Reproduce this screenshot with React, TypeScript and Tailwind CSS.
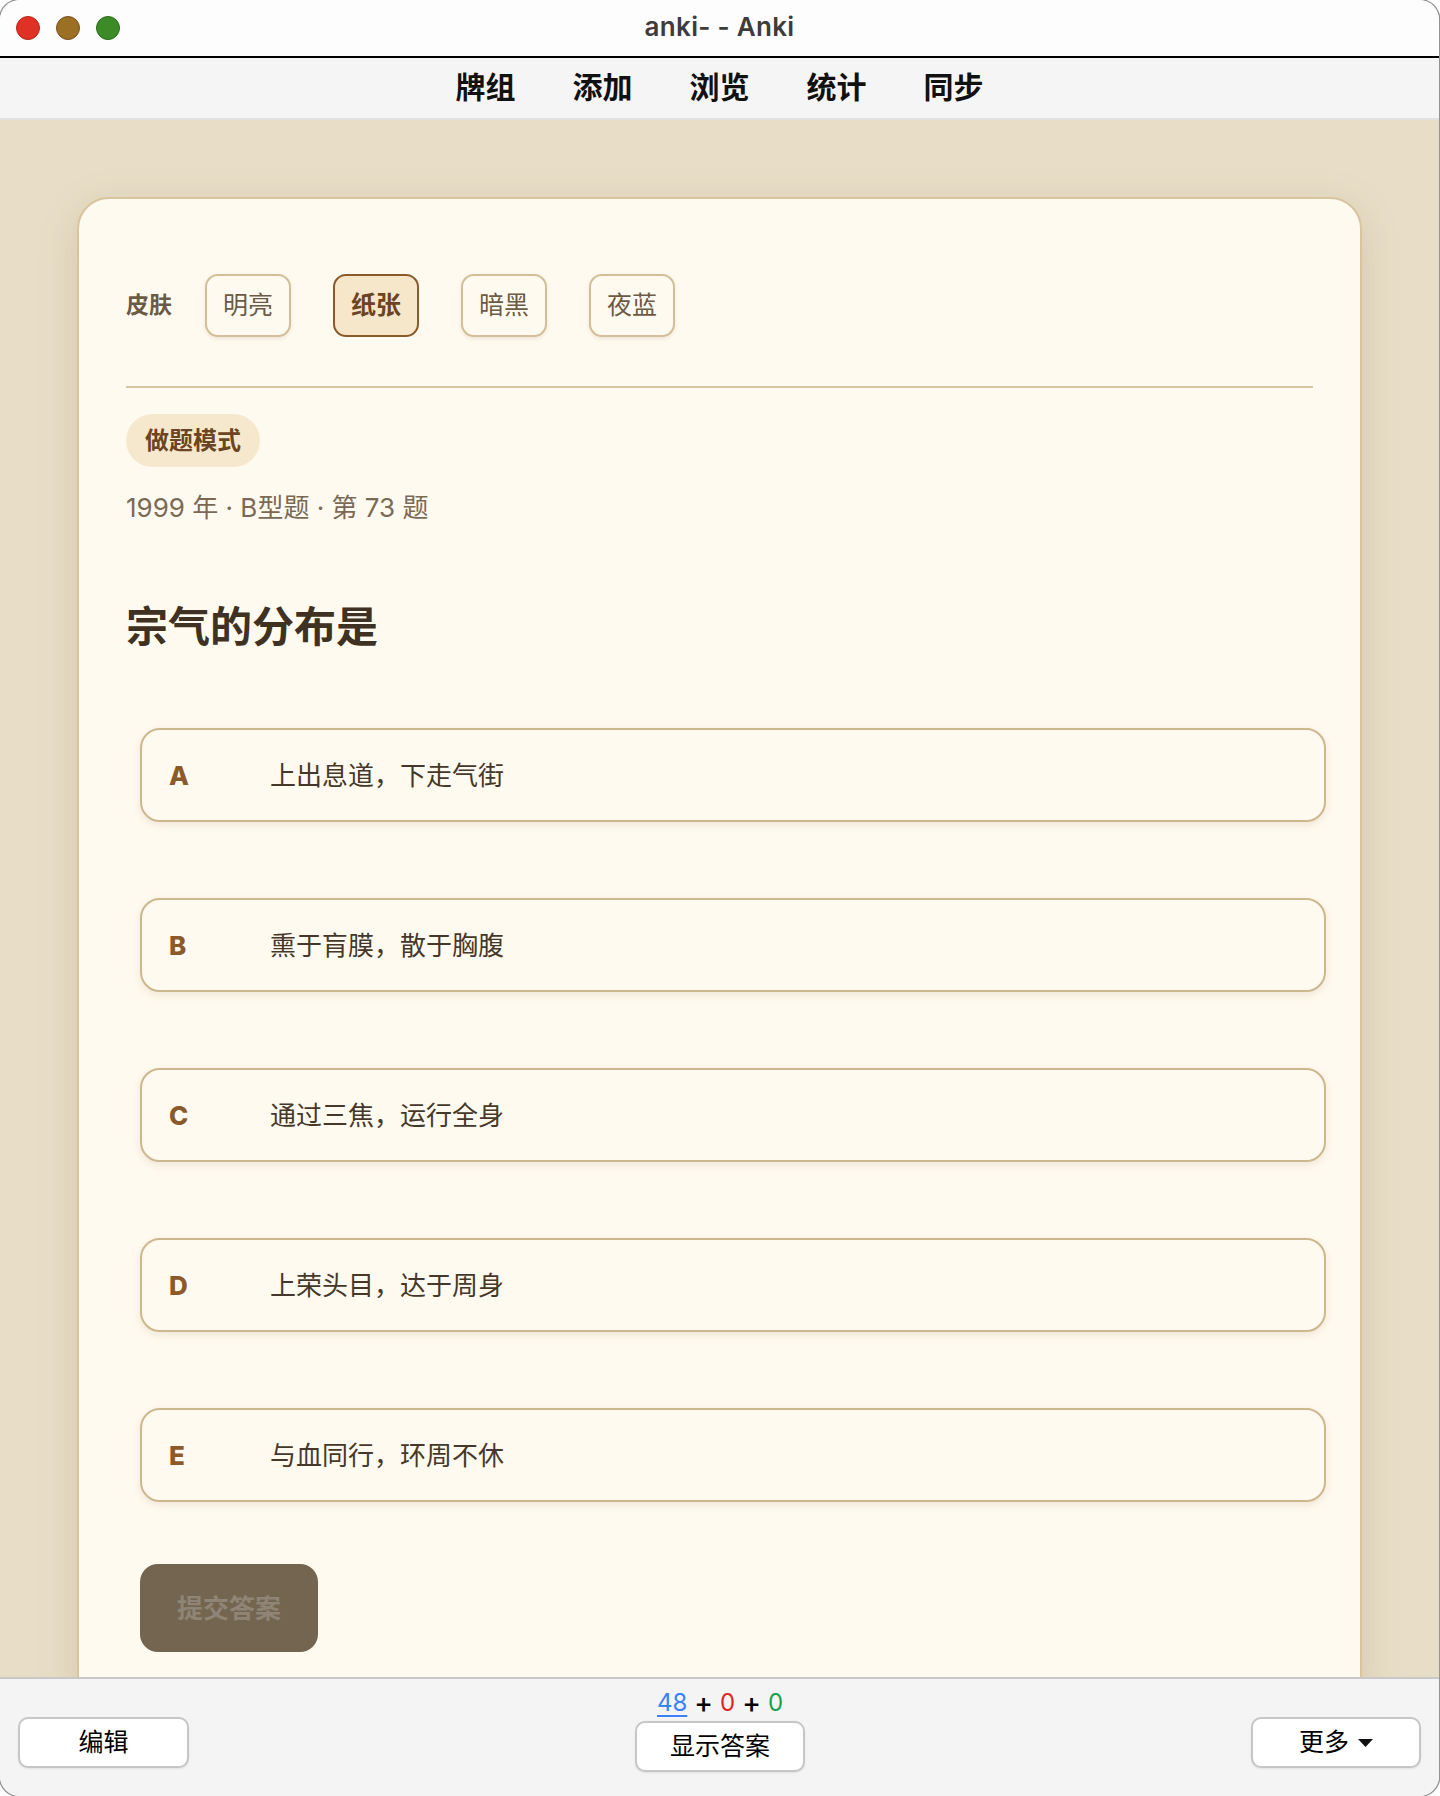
import React from "react";

const CJK = '"Inter", "Noto Sans CJK SC", sans-serif';

const options = [
  { k: "A", t: "上出息道，下走气街" },
  { k: "B", t: "熏于肓膜，散于胸腹" },
  { k: "C", t: "通过三焦，运行全身" },
  { k: "D", t: "上荣头目，达于周身" },
  { k: "E", t: "与血同行，环周不休" },
];

const skins = ["明亮", "纸张", "暗黑", "夜蓝"];

export default function App() {
  return (
    <div className="w-[1440px] h-[1796px] bg-white" style={{ fontFamily: CJK }}>
      <div className="w-[1439px] h-[1796px] rounded-[20px] overflow-hidden flex flex-col shadow-[0_0_0_1.5px_rgba(60,60,60,0.55)]">
        {/* Title bar */}
        <div className="relative h-[56px] bg-[#fdfdfd] flex items-center justify-center shrink-0">
          <div className="absolute left-[16px] top-[16px] flex gap-[16px]">
            <span className="w-[24px] h-[24px] rounded-full bg-[#df3125] border border-[#b5271d]" />
            <span className="w-[24px] h-[24px] rounded-full bg-[#9b6f24] border border-[#7a5218]" />
            <span className="w-[24px] h-[24px] rounded-full bg-[#3c8b27] border border-[#2b6a1a]" />
          </div>
          <span className="text-[26px] font-semibold text-[#3c3c3c] tracking-[0.3px] -mt-[4px]">anki- - Anki</span>
        </div>
        <div className="h-[2px] bg-black shrink-0" />
        {/* Menu bar */}
        <div className="h-[60px] bg-[#f5f5f5] flex items-center justify-center gap-[57px] shrink-0">
          {["牌组", "添加", "浏览", "统计", "同步"].map((m) => (
            <span key={m} className="text-[30px] font-bold text-[#111] leading-none -mt-[2px]">
              {m}
            </span>
          ))}
        </div>
        <div className="h-[2px] bg-[#e2e2e2] shrink-0" />
        {/* Main */}
        <div className="flex-1 overflow-hidden bg-[#e8dec7] px-[77px] pt-[77px]">
          <div className="rounded-[32px] border-2 border-[#d8c59f] bg-[#fffaef] px-[47px] pt-[75px] pb-[60px] shadow-[0_10px_40px_rgba(130,100,50,0.18)]">
            {/* Skins */}
            <div className="flex items-center h-[63px]">
              <span className="text-[23px] font-bold text-[#6b5a45] mr-[33px]">皮肤</span>
              <div className="flex gap-[42px]">
                {skins.map((s) =>
                  s === "纸张" ? (
                    <div
                      key={s}
                      className="w-[86px] h-[63px] rounded-[13px] border-2 border-[#8b5a2b] bg-[#f6e7cb] flex items-center justify-center text-[25px] font-bold text-[#6b4423]"
                    >
                      {s}
                    </div>
                  ) : (
                    <div
                      key={s}
                      className="w-[86px] h-[63px] rounded-[13px] border-2 border-[#d2be98] bg-[#fffaef] flex items-center justify-center text-[25px] text-[#6b5a45] shadow-[0_2px_4px_rgba(120,90,40,0.12)]"
                    >
                      {s}
                    </div>
                  )
                )}
              </div>
            </div>
            <div className="h-[2px] bg-[#d8c59f] mt-[49px]" />
            <div className="mt-[26px] flex">
              <div className="h-[53px] px-[19px] rounded-full bg-[#f6e8cd] flex items-center text-[24px] font-bold text-[#6b4423]">
                做题模式
              </div>
            </div>
            <div className="mt-[24px] text-[26px] leading-[34px] text-[#7a6a55]">1999 年 · B型题 · 第 73 题</div>
            <div className="mt-[74px] text-[42px] leading-[56px] font-bold text-[#3f3222]">宗气的分布是</div>
            <div className="mt-[73px] flex flex-col gap-[76px]">
              {options.map((o) => (
                <div
                  key={o.k}
                  className="ml-[14px] w-[1186px] h-[94px] rounded-[20px] border-2 border-[#cdb78f] bg-[#fffaef] flex items-center pl-[27px] shadow-[0_3px_8px_rgba(120,90,40,0.12)]"
                >
                  <span className="w-[101px] text-[26px] font-extrabold text-[#8b5a2b]">{o.k}</span>
                  <span className="text-[26px] text-[#45382a]">{o.t}</span>
                </div>
              ))}
            </div>
            <div className="mt-[62px] ml-[14px] w-[178px] h-[88px] rounded-[18px] bg-[#736550] flex items-center justify-center text-[26px] font-bold text-[#8e8576]">
              提交答案
            </div>
          </div>
        </div>
        {/* Bottom bar */}
        <div className="h-[2px] bg-[#c8c8c8] shrink-0" />
        <div className="h-[117px] bg-[#f4f4f4] shrink-0 flex justify-between items-start px-[18px]">
          <div className="mt-[38px] w-[171px] h-[51px] rounded-[10px] border-2 border-[#c6c6c6] bg-white flex items-center justify-center text-[25px] text-black shadow-[0_1px_2px_rgba(0,0,0,0.08)]">
            编辑
          </div>
          <div className="flex flex-col items-center">
            <div className="mt-[9px] h-[30px] flex items-center gap-[7px] text-[24px] leading-none">
              <span className="text-[#3b82f6] underline underline-offset-[4px]">48</span>
              <span className="text-black text-[28px] font-medium">+</span>
              <span className="text-[#e02424]">0</span>
              <span className="text-black text-[28px] font-medium">+</span>
              <span className="text-[#16a34a]">0</span>
            </div>
            <div className="mt-[3px] w-[170px] h-[51px] rounded-[10px] border-2 border-[#c6c6c6] bg-white flex items-center justify-center text-[25px] text-black shadow-[0_1px_2px_rgba(0,0,0,0.08)]">
              显示答案
            </div>
          </div>
          <div className="mt-[38px] w-[170px] h-[51px] rounded-[10px] border-2 border-[#c6c6c6] bg-white flex items-center justify-center gap-[9px] text-[25px] text-black shadow-[0_1px_2px_rgba(0,0,0,0.08)]">
            <span>更多</span>
            <svg width="15" height="8" viewBox="0 0 15 8">
              <path d="M0 0 L15 0 L7.5 8 Z" fill="#111" />
            </svg>
          </div>
        </div>
      </div>
    </div>
  );
}
